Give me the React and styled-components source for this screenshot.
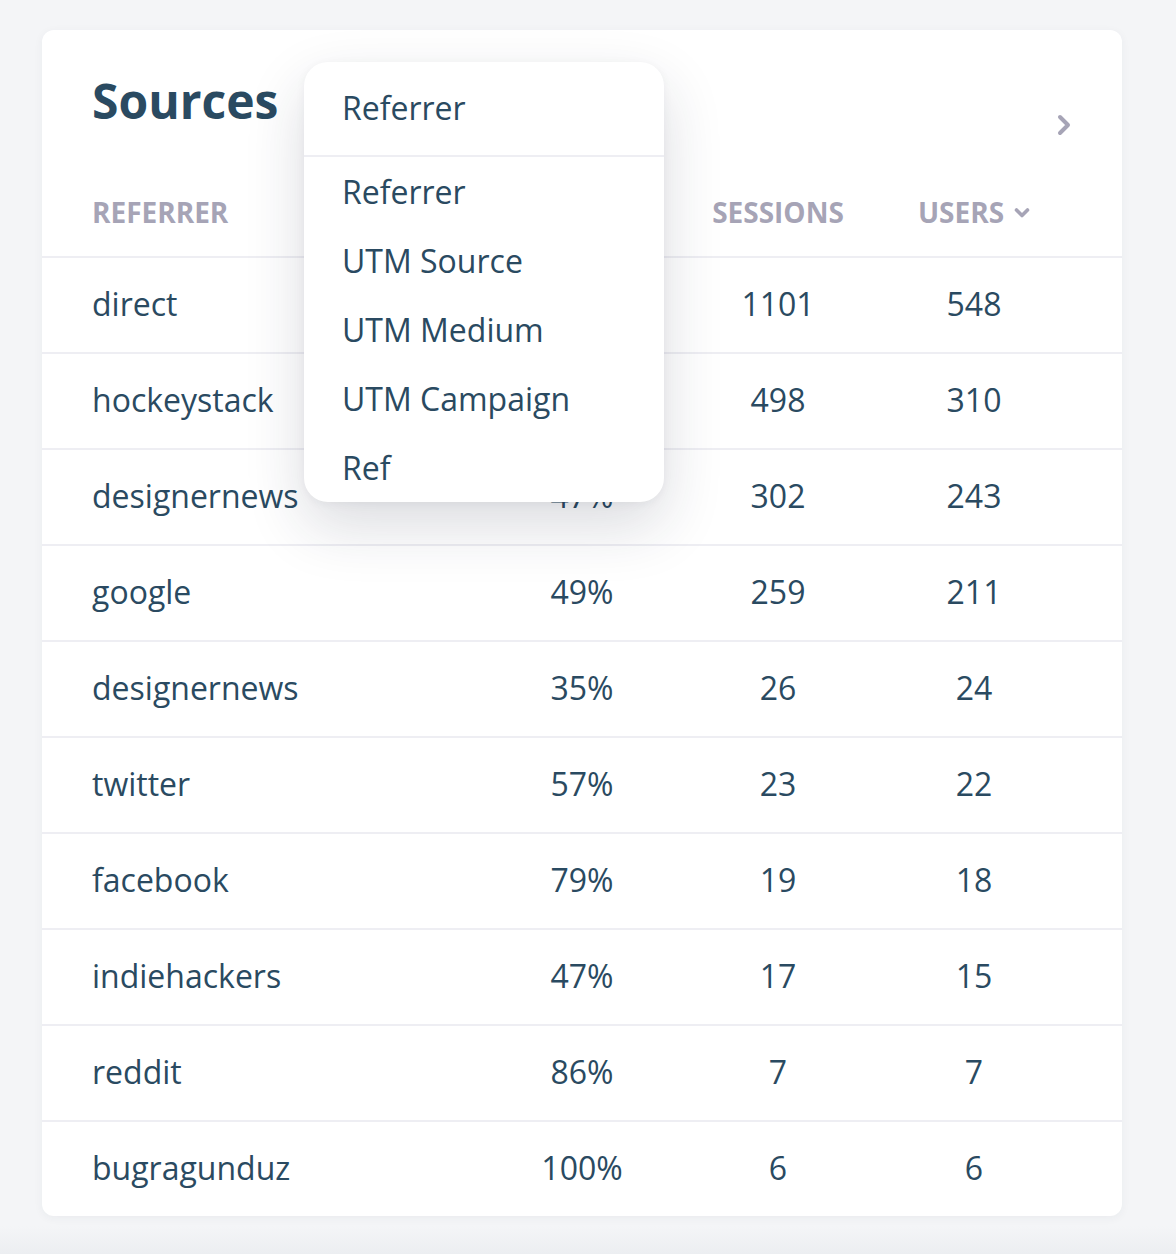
import React from "react";
import styled, { createGlobalStyle } from "styled-components";

const Global = createGlobalStyle`
  html, body { margin: 0; padding: 0; }
  body {
    background: linear-gradient(to bottom, #f4f5f7 0, #f4f5f7 1226px, #eceef1 1254px);
    font-family: "Open Sans", "Noto Sans", sans-serif;
    -webkit-font-smoothing: antialiased;
  }
`;

const Page = styled.div`
  padding: 30px 54px 38px 42px;
  min-height: 1254px;
  box-sizing: border-box;
`;

const Card = styled.div`
  position: relative;
  background: #fff;
  border-radius: 12px;
  box-shadow: 0 2px 10px rgba(40, 50, 80, 0.05);
`;

const TitleRow = styled.div`
  display: flex;
  justify-content: space-between;
  align-items: flex-start;
  height: 134px;
  padding: 0 50px;
  box-sizing: border-box;
`;

const Title = styled.h2`
  margin: 0;
  padding-top: 38px;
  font-size: 48px;
  font-weight: 700;
  line-height: 66px;
  color: #2a4a61;
`;

const IconButton = styled.button`
  border: none;
  background: none;
  padding: 0;
  margin-top: 84px;
  display: flex;
  cursor: pointer;
`;

const Row = styled.div`
  display: grid;
  grid-template-columns: 1fr 196px 196px 196px;
  align-items: center;
  height: ${(p) => (p.$head ? "92px" : "94px")};
  padding: 0 50px;
  box-sizing: content-box;
  border-bottom: ${(p) => (p.$last ? "none" : "2px solid #eeeef3")};
`;

const HeadCell = styled.div`
  font-size: 28px;
  font-weight: 700;
  color: #a6a4b6;
  text-transform: uppercase;
  display: flex;
  align-items: center;
  justify-content: ${(p) => (p.$left ? "flex-start" : "center")};
  gap: 10px;
  padding-top: 4px;
`;

const Cell = styled.div`
  font-size: 32px;
  color: #2a4a61;
  text-align: ${(p) => (p.$left ? "left" : "center")};
  padding-bottom: 3px;
`;

const Menu = styled.div`
  position: absolute;
  left: 262px;
  top: 32px;
  width: 360px;
  background: #fff;
  border-radius: 24px;
  box-shadow: 0 24px 60px rgba(30, 40, 60, 0.16), 0 2px 10px rgba(30, 40, 60, 0.05);
  overflow: hidden;
  z-index: 2;
`;

const MenuTop = styled.div`
  height: 95px;
  display: flex;
  align-items: center;
  padding: 0 38px 2px;
  font-size: 32px;
  color: #2a4a61;
  border-bottom: 2px solid #eeeef3;
  box-sizing: border-box;
`;

const MenuItem = styled.div`
  height: 69px;
  display: flex;
  align-items: center;
  padding: 0 38px;
  font-size: 32px;
  color: #2a4a61;
`;

const ChevronRight = () => (
  <svg width="16" height="22" viewBox="0 0 16 22" fill="none">
    <polyline points="4,3 12,11 4,19" stroke="#a6a4b6" strokeWidth="4" strokeLinecap="round" strokeLinejoin="round" />
  </svg>
);

const ChevronDown = () => (
  <svg width="16" height="11" viewBox="0 0 16 11" fill="none">
    <polyline points="2.5,3 8,8.5 13.5,3" stroke="#a6a4b6" strokeWidth="3.6" strokeLinecap="round" strokeLinejoin="round" />
  </svg>
);

const data = [
  ["direct", "52%", "1101", "548"],
  ["hockeystack", "44%", "498", "310"],
  ["designernews", "47%", "302", "243"],
  ["google", "49%", "259", "211"],
  ["designernews", "35%", "26", "24"],
  ["twitter", "57%", "23", "22"],
  ["facebook", "79%", "19", "18"],
  ["indiehackers", "47%", "17", "15"],
  ["reddit", "86%", "7", "7"],
  ["bugragunduz", "100%", "6", "6"],
];

export default function App() {
  return (
    <>
      <Global />
      <Page>
        <Card>
          <TitleRow>
            <Title>Sources</Title>
            <IconButton aria-label="Next">
              <ChevronRight />
            </IconButton>
          </TitleRow>
          <Row $head>
            <HeadCell $left>Referrer</HeadCell>
            <HeadCell>Bounce</HeadCell>
            <HeadCell>Sessions</HeadCell>
            <HeadCell>
              Users <ChevronDown />
            </HeadCell>
          </Row>
          {data.map((r, i) => (
            <Row key={i} $last={i === data.length - 1}>
              <Cell $left>{r[0]}</Cell>
              <Cell>{r[1]}</Cell>
              <Cell>{r[2]}</Cell>
              <Cell>{r[3]}</Cell>
            </Row>
          ))}
          <Menu>
            <MenuTop>Referrer</MenuTop>
            <MenuItem>Referrer</MenuItem>
            <MenuItem>UTM Source</MenuItem>
            <MenuItem>UTM Medium</MenuItem>
            <MenuItem>UTM Campaign</MenuItem>
            <MenuItem>Ref</MenuItem>
          </Menu>
        </Card>
      </Page>
    </>
  );
}
